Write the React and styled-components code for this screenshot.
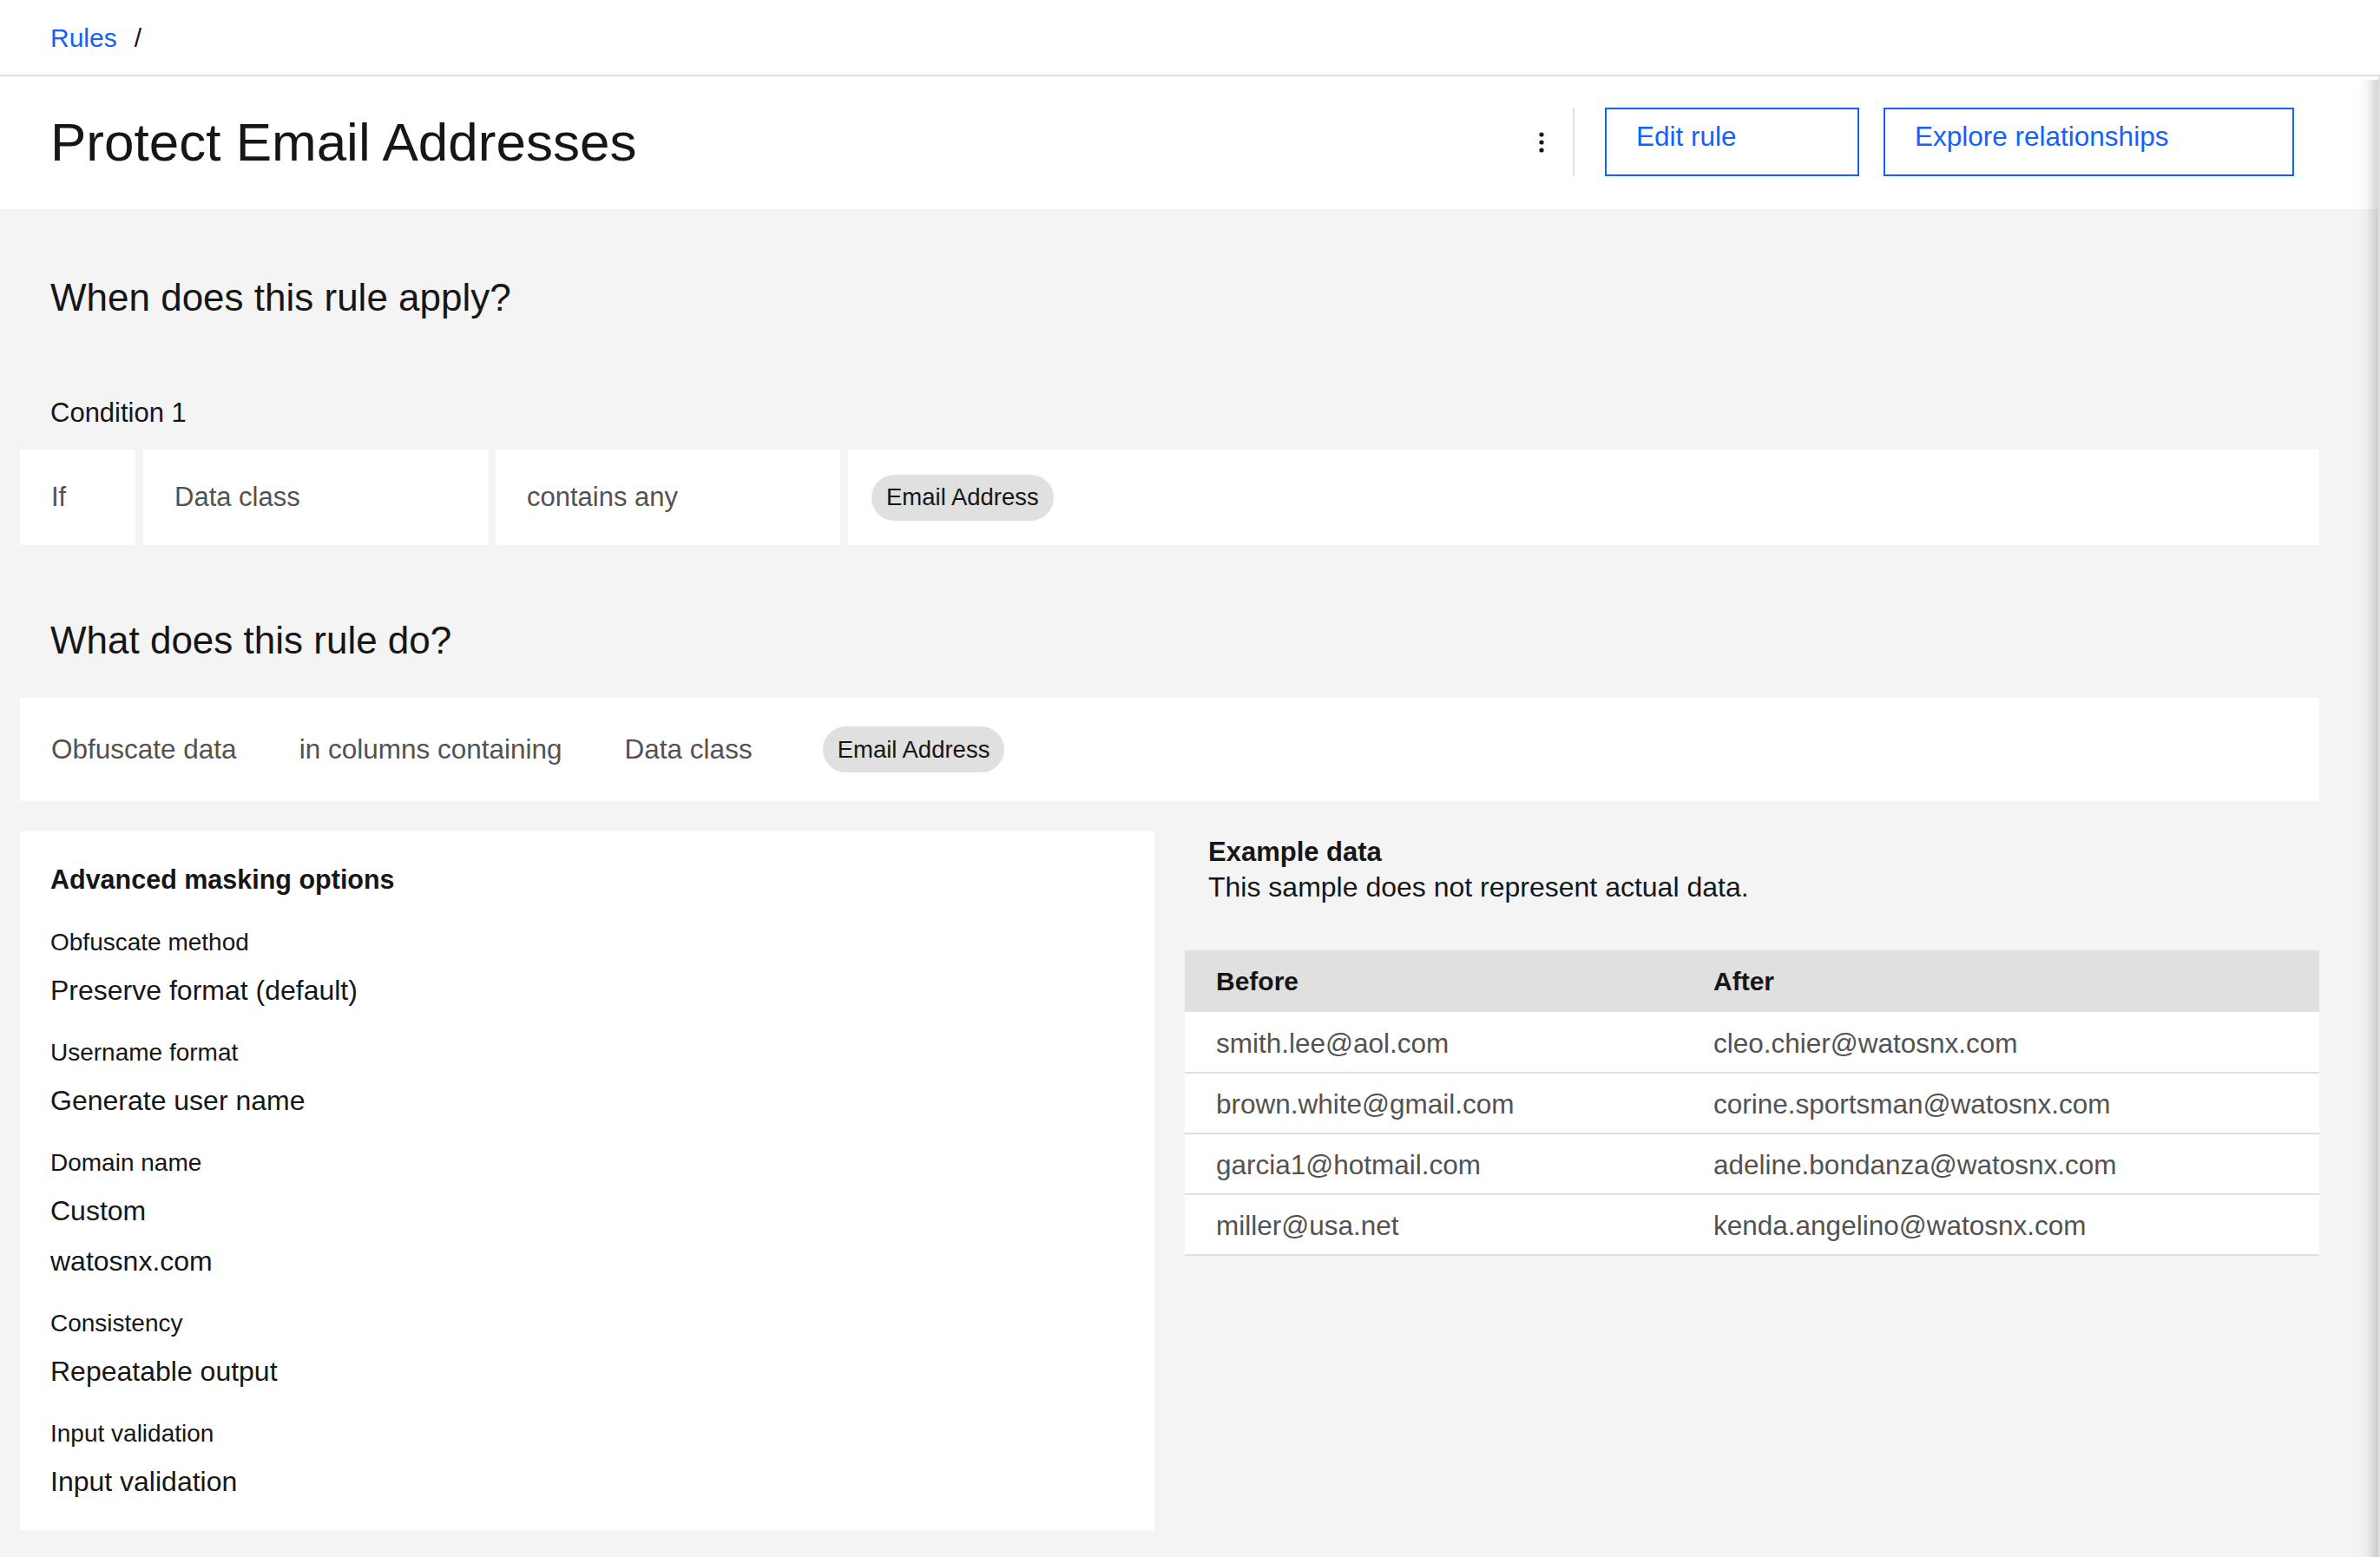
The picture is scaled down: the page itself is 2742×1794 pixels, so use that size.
import React from "react";
import styled, { createGlobalStyle } from "styled-components";

const GlobalStyle = createGlobalStyle`
  html, body {
    margin: 0;
    padding: 0;
    background: #f4f4f4;
  }
  body {
    font-family: "Liberation Sans", Arial, sans-serif;
    color: #161616;
  }
  * {
    box-sizing: border-box;
  }
`;

const Page = styled.div`
  width: 2742px;
  min-height: 1794px;
  display: flex;
  flex-direction: column;
  background: #f4f4f4;
`;

const Breadcrumbs = styled.nav`
  height: 88px;
  display: flex;
  align-items: center;
  padding: 2px 0 0 58px;
  background: #fff;
  border-bottom: 2px solid #e0e0e0;
  font-size: 30px;
`;

const Crumb = styled.a`
  color: #0f62fe;
  text-decoration: none;
`;

const Slash = styled.span`
  margin-left: 20px;
  color: #161616;
`;

const Body = styled.div`
  position: relative;
  flex: 1;
  display: flex;
  flex-direction: column;
  border-right: 2px solid #e0e0e0;

  &::after {
    content: "";
    position: absolute;
    top: 4px;
    right: 0;
    bottom: 0;
    width: 24px;
    pointer-events: none;
    background: linear-gradient(
      to right,
      rgba(0, 0, 0, 0) 0%,
      rgba(0, 0, 0, 0.03) 45%,
      rgba(0, 0, 0, 0.17) 100%
    );
  }
`;

const Header = styled.header`
  height: 153px;
  display: flex;
  align-items: center;
  justify-content: space-between;
  padding: 0 97px 2px 58px;
  background: #fff;
`;

const Title = styled.h1`
  margin: 0;
  font-size: 62px;
  font-weight: 400;
  line-height: 72px;
  color: #161616;
`;

const Actions = styled.div`
  display: flex;
  align-items: center;
`;

const OverflowButton = styled.button`
  width: 72px;
  height: 79px;
  border: none;
  background: transparent;
  display: flex;
  align-items: center;
  justify-content: center;
  padding: 0;
`;

const Divider = styled.span`
  width: 2px;
  height: 79px;
  background: #e0e0e0;
  margin-right: 35px;
`;

const GhostButton = styled.button`
  width: ${(p) => p.$w}px;
  height: 79px;
  margin-left: ${(p) => p.$gap || 0}px;
  display: flex;
  align-items: flex-start;
  padding: 11px 34px;
  border: 2px solid #0f62fe;
  background: #fff;
  color: #0f62fe;
  font-family: inherit;
  font-size: 31.5px;
  line-height: 40px;
  text-align: left;
`;

const Main = styled.main`
  display: flex;
  flex-direction: column;
  padding: 74px 68px 31px 23px;
`;

const SectionHeading = styled.h2`
  margin: ${(p) => p.$top || 0}px 0 0 35px;
  font-size: 44px;
  font-weight: 400;
  line-height: 56px;
  color: #161616;
`;

const ConditionLabel = styled.div`
  margin: 85px 0 0 35px;
  font-size: 31px;
  line-height: 40px;
  color: #161616;
`;

const ConditionRow = styled.div`
  margin-top: 22px;
  height: 110px;
  display: grid;
  grid-template-columns: 133px 397px 397px 1fr;
  gap: 9px;
`;

const Cell = styled.div`
  display: flex;
  align-items: center;
  padding-left: ${(p) => (p.$tag ? 27 : 36)}px;
  background: #fff;
  font-size: 31px;
  color: #525252;
`;

const Tag = styled.span`
  display: inline-flex;
  align-items: center;
  height: 53px;
  padding: 0 17px;
  margin-left: ${(p) => p.$offset || 0}px;
  border-radius: 27px;
  background: #e0e0e0;
  color: #161616;
  font-size: 27.5px;
`;

const ActionRow = styled.div`
  margin-top: 38px;
  height: 119px;
  display: flex;
  align-items: center;
  gap: 72px;
  padding-left: 36px;
  background: #fff;
  font-size: 31.5px;
  color: #525252;
`;

const Split = styled.div`
  margin-top: 35px;
  display: grid;
  grid-template-columns: 1fr 1fr;
  gap: 35px;
  align-items: start;
`;

const OptionsCard = styled.section`
  background: #fff;
  padding: 35px 35px 36px;
  display: flex;
  flex-direction: column;
`;

const CardTitle = styled.h3`
  margin: 0 0 37px;
  font-size: 30.5px;
  font-weight: 700;
  line-height: 40px;
`;

const OptionGroup = styled.div`
  display: flex;
  flex-direction: column;
  gap: 18px;
  & + & {
    margin-top: 36px;
  }
`;

const OptionLabel = styled.div`
  font-size: 28px;
  line-height: 32px;
  color: #161616;
  margin-bottom: 1px;
`;

const OptionValue = styled.div`
  font-size: 32px;
  line-height: 40px;
  color: #161616;
`;

const ExampleColumn = styled.section`
  display: flex;
  flex-direction: column;
  padding-top: 4px;
`;

const ExampleTitle = styled.div`
  padding-left: 27px;
  font-size: 31px;
  font-weight: 700;
  line-height: 40px;
`;

const ExampleNote = styled.div`
  padding-left: 27px;
  font-size: 32px;
  line-height: 40px;
`;

const Table = styled.table`
  margin-top: 53px;
  width: 100%;
  border-collapse: collapse;
  table-layout: fixed;
`;

const HeadCell = styled.th`
  height: 71px;
  padding: 0 36px;
  background: #e0e0e0;
  text-align: left;
  font-size: 30px;
  font-weight: 700;
  color: #161616;
`;

const DataCell = styled.td`
  height: 70px;
  padding: 3px 36px 0;
  background: #fff;
  border-bottom: 2px solid #e0e0e0;
  font-size: 31.5px;
  color: #525252;
`;

const options = [
  { label: "Obfuscate method", values: ["Preserve format (default)"] },
  { label: "Username format", values: ["Generate user name"] },
  { label: "Domain name", values: ["Custom", "watosnx.com"] },
  { label: "Consistency", values: ["Repeatable output"] },
  { label: "Input validation", values: ["Input validation"] },
];

const samples = [
  ["smith.lee@aol.com", "cleo.chier@watosnx.com"],
  ["brown.white@gmail.com", "corine.sportsman@watosnx.com"],
  ["garcia1@hotmail.com", "adeline.bondanza@watosnx.com"],
  ["miller@usa.net", "kenda.angelino@watosnx.com"],
];

const OverflowIcon = () => (
  <svg width="8" height="26" viewBox="0 0 8 26" fill="#161616">
    <circle cx="4" cy="4" r="2.6" />
    <circle cx="4" cy="13" r="2.6" />
    <circle cx="4" cy="22" r="2.6" />
  </svg>
);

export default function App() {
  return (
    <Page>
      <GlobalStyle />
      <Breadcrumbs>
        <Crumb href="#">Rules</Crumb>
        <Slash>/</Slash>
      </Breadcrumbs>
      <Body>
        <Header>
          <Title>Protect Email Addresses</Title>
          <Actions>
            <OverflowButton aria-label="More">
              <OverflowIcon />
            </OverflowButton>
            <Divider />
            <GhostButton $w={293}>Edit rule</GhostButton>
            <GhostButton $w={473} $gap={28}>
              Explore relationships
            </GhostButton>
          </Actions>
        </Header>

        <Main>
          <SectionHeading>When does this rule apply?</SectionHeading>
          <ConditionLabel>Condition 1</ConditionLabel>
          <ConditionRow>
            <Cell>If</Cell>
            <Cell>Data class</Cell>
            <Cell>contains any</Cell>
            <Cell $tag>
              <Tag>Email Address</Tag>
            </Cell>
          </ConditionRow>

          <SectionHeading $top={82}>What does this rule do?</SectionHeading>
          <ActionRow>
            <span>Obfuscate data</span>
            <span>in columns containing</span>
            <span>Data class</span>
            <Tag $offset={9}>Email Address</Tag>
          </ActionRow>

          <Split>
            <OptionsCard>
              <CardTitle>Advanced masking options</CardTitle>
              {options.map((opt) => (
                <OptionGroup key={opt.label}>
                  <OptionLabel>{opt.label}</OptionLabel>
                  {opt.values.map((v) => (
                    <OptionValue key={v}>{v}</OptionValue>
                  ))}
                </OptionGroup>
              ))}
            </OptionsCard>

            <ExampleColumn>
              <ExampleTitle>Example data</ExampleTitle>
              <ExampleNote>This sample does not represent actual data.</ExampleNote>
              <Table>
                <colgroup>
                  <col style={{ width: 573 }} />
                  <col />
                </colgroup>
                <thead>
                  <tr>
                    <HeadCell>Before</HeadCell>
                    <HeadCell>After</HeadCell>
                  </tr>
                </thead>
                <tbody>
                  {samples.map(([before, after]) => (
                    <tr key={before}>
                      <DataCell>{before}</DataCell>
                      <DataCell>{after}</DataCell>
                    </tr>
                  ))}
                </tbody>
              </Table>
            </ExampleColumn>
          </Split>
        </Main>
      </Body>
    </Page>
  );
}
